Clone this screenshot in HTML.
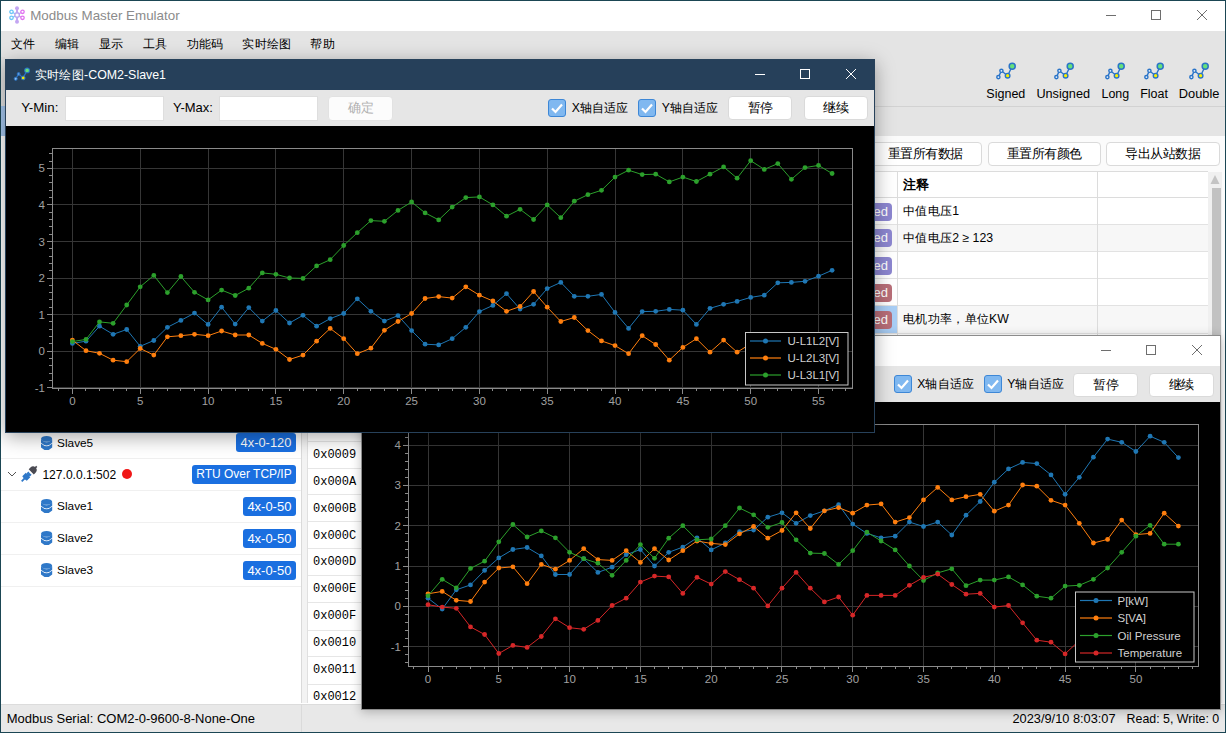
<!DOCTYPE html><html><head><meta charset="utf-8"><style>html,body{margin:0;padding:0;}body{width:1226px;height:733px;overflow:hidden;position:relative;background:#1b4654;font-family:"Liberation Sans", sans-serif;}div{box-sizing:border-box}</style></head><body><div style="position:absolute;left:1px;top:1px;width:1224px;height:731px;background:#fff"></div><svg style="position:absolute;left:8px;top:5px" width="18" height="20" viewBox="0 0 18 20"><g stroke-width="1.3" fill="#fff"><path d="M9.1 10 L9 3.5 M9.1 10 L9 16.5" stroke="#c3a6f2" stroke-width="2"/><path d="M9.1 10 L3.5 6.8 M9.1 10 L3.5 12.8" stroke="#90c8f5" stroke-width="1.3"/><path d="M9.1 10 L14.5 6.8 M9.1 10 L14.5 12.8" stroke="#d8a0f0" stroke-width="1.3"/><circle cx="9.1" cy="10" r="2.3" stroke="#b8a8f0" stroke-width="1.4"/><circle cx="3.5" cy="6.8" r="1.7" stroke="#6cc6f8"/><circle cx="3.5" cy="12.8" r="1.7" stroke="#6cc6f8"/><circle cx="14.5" cy="6.8" r="1.7" stroke="#e070f0"/><circle cx="14.5" cy="12.8" r="1.7" stroke="#e070f0"/></g><g fill="#c3a6f2"><circle cx="9" cy="3.2" r="2"/><circle cx="9" cy="16.8" r="2"/></g></svg><div style="position:absolute;left:30.2px;top:5.5px;line-height:20px;font-size:13.38px;color:#8b8b8b;white-space:nowrap;">Modbus Master Emulator</div><svg style="position:absolute;left:0;top:0" width="1226" height="733" viewBox="0 0 1226 733"><g stroke="#6e6e6e" stroke-width="1" fill="none"><path d="M1106 15.5h10"/><rect x="1151.5" y="10.5" width="9" height="9"/><path d="M1197 10l10 10M1207 10l-10 10"/></g></svg><div style="position:absolute;left:1px;top:31px;width:1224px;height:26px;background:#e4e4e4"></div><div style="position:absolute;left:10.5px;top:33.5px;line-height:20px;font-size:12.4px;color:#000;white-space:nowrap;"><span style="display:inline-block;width:1em;text-align:center">文</span><span style="display:inline-block;width:1em;text-align:center">件</span></div><div style="position:absolute;left:54.5px;top:33.5px;line-height:20px;font-size:12.4px;color:#000;white-space:nowrap;"><span style="display:inline-block;width:1em;text-align:center">编</span><span style="display:inline-block;width:1em;text-align:center">辑</span></div><div style="position:absolute;left:98.5px;top:33.5px;line-height:20px;font-size:12.4px;color:#000;white-space:nowrap;"><span style="display:inline-block;width:1em;text-align:center">显</span><span style="display:inline-block;width:1em;text-align:center">示</span></div><div style="position:absolute;left:142.5px;top:33.5px;line-height:20px;font-size:12.4px;color:#000;white-space:nowrap;"><span style="display:inline-block;width:1em;text-align:center">工</span><span style="display:inline-block;width:1em;text-align:center">具</span></div><div style="position:absolute;left:186.5px;top:33.5px;line-height:20px;font-size:12.4px;color:#000;white-space:nowrap;"><span style="display:inline-block;width:1em;text-align:center">功</span><span style="display:inline-block;width:1em;text-align:center">能</span><span style="display:inline-block;width:1em;text-align:center">码</span></div><div style="position:absolute;left:242px;top:33.5px;line-height:20px;font-size:12.4px;color:#000;white-space:nowrap;"><span style="display:inline-block;width:1em;text-align:center">实</span><span style="display:inline-block;width:1em;text-align:center">时</span><span style="display:inline-block;width:1em;text-align:center">绘</span><span style="display:inline-block;width:1em;text-align:center">图</span></div><div style="position:absolute;left:310px;top:33.5px;line-height:20px;font-size:12.4px;color:#000;white-space:nowrap;"><span style="display:inline-block;width:1em;text-align:center">帮</span><span style="display:inline-block;width:1em;text-align:center">助</span></div><div style="position:absolute;left:1px;top:57px;width:1224px;height:79px;background:#e4e4e4"></div><div style="position:absolute;left:1px;top:106px;width:1224px;height:1px;background:#d2d2d2"></div><svg style="position:absolute;left:996.3px;top:62px" width="21" height="19" viewBox="0 0 21 19"><path d="M2.4 15.1 L5.4 8.8 L11.6 13.7 L16.2 4.3" stroke="#2a74c8" stroke-width="1.4" fill="none"/><circle cx="2.4" cy="15.1" r="1.6" fill="#e8f0fa" stroke="#2a74c8" stroke-width="1.4"/><circle cx="5.4" cy="8.8" r="1.6" fill="#e8f0fa" stroke="#2a74c8" stroke-width="1.4"/><circle cx="11.6" cy="13.7" r="2.3" fill="#f8f000" stroke="#2a74c8" stroke-width="1.4"/><circle cx="16.2" cy="4.3" r="3.0" fill="#66e07a" stroke="#2a74c8" stroke-width="1.5"/></svg><div style="position:absolute;left:986.3px;top:83.5px;line-height:20px;font-size:12.54px;color:#000;white-space:nowrap;">Signed</div><svg style="position:absolute;left:1054.3px;top:62px" width="21" height="19" viewBox="0 0 21 19"><path d="M2.4 15.1 L5.4 8.8 L11.6 13.7 L16.2 4.3" stroke="#2a74c8" stroke-width="1.4" fill="none"/><circle cx="2.4" cy="15.1" r="1.6" fill="#e8f0fa" stroke="#2a74c8" stroke-width="1.4"/><circle cx="5.4" cy="8.8" r="1.6" fill="#e8f0fa" stroke="#2a74c8" stroke-width="1.4"/><circle cx="11.6" cy="13.7" r="2.3" fill="#f8f000" stroke="#2a74c8" stroke-width="1.4"/><circle cx="16.2" cy="4.3" r="3.0" fill="#66e07a" stroke="#2a74c8" stroke-width="1.5"/></svg><div style="position:absolute;left:1036.4px;top:83.5px;line-height:20px;font-size:12.7px;color:#000;white-space:nowrap;">Unsigned</div><svg style="position:absolute;left:1105.3px;top:62px" width="21" height="19" viewBox="0 0 21 19"><path d="M2.4 15.1 L5.4 8.8 L11.6 13.7 L16.2 4.3" stroke="#2a74c8" stroke-width="1.4" fill="none"/><circle cx="2.4" cy="15.1" r="1.6" fill="#e8f0fa" stroke="#2a74c8" stroke-width="1.4"/><circle cx="5.4" cy="8.8" r="1.6" fill="#e8f0fa" stroke="#2a74c8" stroke-width="1.4"/><circle cx="11.6" cy="13.7" r="2.3" fill="#f8f000" stroke="#2a74c8" stroke-width="1.4"/><circle cx="16.2" cy="4.3" r="3.0" fill="#66e07a" stroke="#2a74c8" stroke-width="1.5"/></svg><div style="position:absolute;left:1101.5px;top:83.5px;line-height:20px;font-size:12.43px;color:#000;white-space:nowrap;">Long</div><svg style="position:absolute;left:1144.3px;top:62px" width="21" height="19" viewBox="0 0 21 19"><path d="M2.4 15.1 L5.4 8.8 L11.6 13.7 L16.2 4.3" stroke="#2a74c8" stroke-width="1.4" fill="none"/><circle cx="2.4" cy="15.1" r="1.6" fill="#e8f0fa" stroke="#2a74c8" stroke-width="1.4"/><circle cx="5.4" cy="8.8" r="1.6" fill="#e8f0fa" stroke="#2a74c8" stroke-width="1.4"/><circle cx="11.6" cy="13.7" r="2.3" fill="#f8f000" stroke="#2a74c8" stroke-width="1.4"/><circle cx="16.2" cy="4.3" r="3.0" fill="#66e07a" stroke="#2a74c8" stroke-width="1.5"/></svg><div style="position:absolute;left:1140.2px;top:83.5px;line-height:20px;font-size:12.47px;color:#000;white-space:nowrap;">Float</div><svg style="position:absolute;left:1189.3px;top:62px" width="21" height="19" viewBox="0 0 21 19"><path d="M2.4 15.1 L5.4 8.8 L11.6 13.7 L16.2 4.3" stroke="#2a74c8" stroke-width="1.4" fill="none"/><circle cx="2.4" cy="15.1" r="1.6" fill="#e8f0fa" stroke="#2a74c8" stroke-width="1.4"/><circle cx="5.4" cy="8.8" r="1.6" fill="#e8f0fa" stroke="#2a74c8" stroke-width="1.4"/><circle cx="11.6" cy="13.7" r="2.3" fill="#f8f000" stroke="#2a74c8" stroke-width="1.4"/><circle cx="16.2" cy="4.3" r="3.0" fill="#66e07a" stroke="#2a74c8" stroke-width="1.5"/></svg><div style="position:absolute;left:1178.8px;top:83.5px;line-height:20px;font-size:12.84px;color:#000;white-space:nowrap;">Double</div><div style="position:absolute;left:1px;top:136px;width:1224px;height:567px;background:#fbfbfb"></div><div style="position:absolute;left:868.5px;top:141.5px;width:113.0px;height:24px;background:#fff;border:1px solid #dadada;border-radius:4px;box-sizing:border-box;text-align:center;line-height:22px;font-size:12.5px;color:#000"><span style="display:inline-block;width:1em;text-align:center">重</span><span style="display:inline-block;width:1em;text-align:center">置</span><span style="display:inline-block;width:1em;text-align:center">所</span><span style="display:inline-block;width:1em;text-align:center">有</span><span style="display:inline-block;width:1em;text-align:center">数</span><span style="display:inline-block;width:1em;text-align:center">据</span></div><div style="position:absolute;left:987.5px;top:141.5px;width:113.1px;height:24px;background:#fff;border:1px solid #dadada;border-radius:4px;box-sizing:border-box;text-align:center;line-height:22px;font-size:12.5px;color:#000"><span style="display:inline-block;width:1em;text-align:center">重</span><span style="display:inline-block;width:1em;text-align:center">置</span><span style="display:inline-block;width:1em;text-align:center">所</span><span style="display:inline-block;width:1em;text-align:center">有</span><span style="display:inline-block;width:1em;text-align:center">颜</span><span style="display:inline-block;width:1em;text-align:center">色</span></div><div style="position:absolute;left:1106.4px;top:141.5px;width:113.2px;height:24px;background:#fff;border:1px solid #dadada;border-radius:4px;box-sizing:border-box;text-align:center;line-height:22px;font-size:12.5px;color:#000"><span style="display:inline-block;width:1em;text-align:center">导</span><span style="display:inline-block;width:1em;text-align:center">出</span><span style="display:inline-block;width:1em;text-align:center">从</span><span style="display:inline-block;width:1em;text-align:center">站</span><span style="display:inline-block;width:1em;text-align:center">数</span><span style="display:inline-block;width:1em;text-align:center">据</span></div><div style="position:absolute;left:308px;top:171px;width:900px;height:532px;background:#fff;border-top:1px solid #dcdcdc"></div><div style="position:absolute;left:308px;top:197px;width:900px;height:1px;background:#dcdcdc"></div><div style="position:absolute;left:903px;top:174.5px;line-height:20px;font-size:13px;color:#000;white-space:nowrap;font-weight:bold"><span style="display:inline-block;width:1em;text-align:center">注</span><span style="display:inline-block;width:1em;text-align:center">释</span></div><div style="position:absolute;left:308px;top:198px;width:900px;height:27px;background:#ffffff;border-bottom:1px solid #e2e2e2"></div><div style="position:absolute;left:308px;top:225px;width:900px;height:27px;background:#f7f7f7;border-bottom:1px solid #e2e2e2"></div><div style="position:absolute;left:308px;top:252px;width:900px;height:27px;background:#ffffff;border-bottom:1px solid #e2e2e2"></div><div style="position:absolute;left:308px;top:279px;width:900px;height:27px;background:#ffffff;border-bottom:1px solid #e2e2e2"></div><div style="position:absolute;left:308px;top:306px;width:900px;height:28px;background:#f7f7f7;border-bottom:1px solid #e2e2e2"></div><div style="position:absolute;left:868px;top:306px;width:29px;height:27px;background:#a9cef5"></div><div style="position:absolute;left:850px;top:202.6px;width:42px;height:18px;background:#8c86d0;border-radius:4px;color:#fff;font-size:13px;line-height:18px;text-align:right;padding-right:4px">ed</div><div style="position:absolute;left:903px;top:200.9px;line-height:20px;font-size:12.3px;color:#000;white-space:nowrap;"><span style="display:inline-block;width:1em;text-align:center">中</span><span style="display:inline-block;width:1em;text-align:center">值</span><span style="display:inline-block;width:1em;text-align:center">电</span><span style="display:inline-block;width:1em;text-align:center">压</span>1</div><div style="position:absolute;left:850px;top:229.4px;width:42px;height:18px;background:#8c86d0;border-radius:4px;color:#fff;font-size:13px;line-height:18px;text-align:right;padding-right:4px">ed</div><div style="position:absolute;left:903px;top:227.8px;line-height:20px;font-size:12.3px;color:#000;white-space:nowrap;"><span style="display:inline-block;width:1em;text-align:center">中</span><span style="display:inline-block;width:1em;text-align:center">值</span><span style="display:inline-block;width:1em;text-align:center">电</span><span style="display:inline-block;width:1em;text-align:center">压</span>2 ≥ 123</div><div style="position:absolute;left:850px;top:256.5px;width:42px;height:18px;background:#8c86d0;border-radius:4px;color:#fff;font-size:13px;line-height:18px;text-align:right;padding-right:4px">ed</div><div style="position:absolute;left:850px;top:283.5px;width:42px;height:18px;background:#b86e78;border-radius:4px;color:#fff;font-size:13px;line-height:18px;text-align:right;padding-right:4px">ed</div><div style="position:absolute;left:850px;top:310.8px;width:42px;height:18px;background:#b86e78;border-radius:4px;color:#fff;font-size:13px;line-height:18px;text-align:right;padding-right:4px">ed</div><div style="position:absolute;left:903px;top:309.1px;line-height:20px;font-size:12.3px;color:#000;white-space:nowrap;"><span style="display:inline-block;width:1em;text-align:center">电</span><span style="display:inline-block;width:1em;text-align:center">机</span><span style="display:inline-block;width:1em;text-align:center">功</span><span style="display:inline-block;width:1em;text-align:center">率</span><span style="display:inline-block;width:1em;text-align:center">，</span><span style="display:inline-block;width:1em;text-align:center">单</span><span style="display:inline-block;width:1em;text-align:center">位</span>KW</div><div style="position:absolute;left:897px;top:171px;width:1px;height:170px;background:#dcdcdc"></div><div style="position:absolute;left:1097px;top:171px;width:1px;height:170px;background:#dcdcdc"></div><div style="position:absolute;left:1208px;top:172px;width:14px;height:531px;background:#f0f0f0"></div><svg style="position:absolute;left:1208px;top:172px" width="14" height="16"><path d="M7 3 L11.5 12 H2.5Z" fill="#c4c4c4"/></svg><div style="position:absolute;left:1212px;top:188px;width:9px;height:520px;background:#c2c2c2"></div><div style="position:absolute;left:1px;top:136px;width:300px;height:567px;background:#fff"></div><div style="position:absolute;left:301px;top:136px;width:1px;height:567px;background:#dadada"></div><div style="position:absolute;left:302px;top:136px;width:6px;height:567px;background:#f3f3f3"></div><div style="position:absolute;left:307px;top:136px;width:1px;height:567px;background:#e0e0e0"></div><div style="position:absolute;left:1px;top:458px;width:300px;height:1px;background:#f0f0f0"></div><div style="position:absolute;left:1px;top:490px;width:300px;height:1px;background:#f0f0f0"></div><div style="position:absolute;left:1px;top:522px;width:300px;height:1px;background:#f0f0f0"></div><div style="position:absolute;left:1px;top:554px;width:300px;height:1px;background:#f0f0f0"></div><div style="position:absolute;left:1px;top:586px;width:300px;height:1px;background:#f0f0f0"></div><div style="position:absolute;left:1px;top:106px;width:4px;height:30px;background:#a6c8f0"></div><div style="position:absolute;left:1px;top:57px;width:4px;height:49px;background:#e0e0e0"></div><svg style="position:absolute;left:41px;top:435.5px" width="12" height="15" viewBox="0 0 12 15"><g fill="#2f78c8"><ellipse cx="5.6" cy="2.9" rx="5.6" ry="2.9"/><path d="M0 3.6 Q5.6 9.0 11.2 3.6 V6.7 Q5.6 12.1 0 6.7Z"/><path d="M0 7.5 Q5.6 12.9 11.2 7.5 V11.4 Q5.6 16.8 0 11.4Z"/></g></svg><div style="position:absolute;left:57.1px;top:432.5px;line-height:20px;font-size:11.8px;color:#000;white-space:nowrap;">Slave5</div><div style="position:absolute;left:236.0px;width:60.0px;top:433.1px;height:19px;line-height:19px;background:#1a6fe0;color:#fff;font-size:12.86px;border-radius:3px;white-space:nowrap;text-align:center">4x-0-120</div><svg style="position:absolute;left:6px;top:468px" width="12" height="12"><path d="M2 4 L6 8 L10 4" stroke="#555" stroke-width="1" fill="none"/></svg><svg style="position:absolute;left:0;top:440px" width="60" height="60" viewBox="0 440 60 60"><g transform="translate(27 476.1) rotate(-45)"><path d="M-7.5 0H-3" stroke="#2f78c8" stroke-width="1.8"/><path d="M-3.5 -3.2 Q-4.5 0 -3.5 3.2 L1.5 3.2 V1.2 H4 V-1.2 H1.5 V-3.2Z" fill="#2f78c8"/><path d="M1.5 1.6H4.2M1.5 -1.6H4.2" stroke="#2f78c8" stroke-width="1.4"/><path d="M6 -3.6 H8.5 A3.6 3.6 0 0 1 8.5 3.6 H6Z" fill="#4a4a52"/><path d="M11 0H13.8" stroke="#4a4a52" stroke-width="1.6"/></g></svg><div style="position:absolute;left:42.4px;top:465.2px;line-height:20px;font-size:12.08px;color:#000;white-space:nowrap;">127.0.0.1:502</div><div style="position:absolute;left:122px;top:469px;width:10px;height:10px;border-radius:5px;background:#f01818"></div><div style="position:absolute;left:192.0px;width:104.0px;top:465.0px;height:19px;line-height:19px;background:#1a6fe0;color:#fff;font-size:11.97px;border-radius:3px;white-space:nowrap;text-align:center">RTU Over TCP/IP</div><svg style="position:absolute;left:41px;top:498.9px" width="12" height="15" viewBox="0 0 12 15"><g fill="#2f78c8"><ellipse cx="5.6" cy="2.9" rx="5.6" ry="2.9"/><path d="M0 3.6 Q5.6 9.0 11.2 3.6 V6.7 Q5.6 12.1 0 6.7Z"/><path d="M0 7.5 Q5.6 12.9 11.2 7.5 V11.4 Q5.6 16.8 0 11.4Z"/></g></svg><div style="position:absolute;left:57.1px;top:496.0px;line-height:20px;font-size:11.8px;color:#000;white-space:nowrap;">Slave1</div><div style="position:absolute;left:242.8px;width:53.2px;top:496.5px;height:19px;line-height:19px;background:#1a6fe0;color:#fff;font-size:12.98px;border-radius:3px;white-space:nowrap;text-align:center">4x-0-50</div><svg style="position:absolute;left:41px;top:531.3px" width="12" height="15" viewBox="0 0 12 15"><g fill="#2f78c8"><ellipse cx="5.6" cy="2.9" rx="5.6" ry="2.9"/><path d="M0 3.6 Q5.6 9.0 11.2 3.6 V6.7 Q5.6 12.1 0 6.7Z"/><path d="M0 7.5 Q5.6 12.9 11.2 7.5 V11.4 Q5.6 16.8 0 11.4Z"/></g></svg><div style="position:absolute;left:57.1px;top:528.4px;line-height:20px;font-size:11.8px;color:#000;white-space:nowrap;">Slave2</div><div style="position:absolute;left:242.8px;width:53.2px;top:528.9px;height:19px;line-height:19px;background:#1a6fe0;color:#fff;font-size:12.98px;border-radius:3px;white-space:nowrap;text-align:center">4x-0-50</div><svg style="position:absolute;left:41px;top:563.1999999999999px" width="12" height="15" viewBox="0 0 12 15"><g fill="#2f78c8"><ellipse cx="5.6" cy="2.9" rx="5.6" ry="2.9"/><path d="M0 3.6 Q5.6 9.0 11.2 3.6 V6.7 Q5.6 12.1 0 6.7Z"/><path d="M0 7.5 Q5.6 12.9 11.2 7.5 V11.4 Q5.6 16.8 0 11.4Z"/></g></svg><div style="position:absolute;left:57.1px;top:560.3px;line-height:20px;font-size:11.8px;color:#000;white-space:nowrap;">Slave3</div><div style="position:absolute;left:242.8px;width:53.2px;top:560.8px;height:19px;line-height:19px;background:#1a6fe0;color:#fff;font-size:12.98px;border-radius:3px;white-space:nowrap;text-align:center">4x-0-50</div><div style="position:absolute;left:308px;top:432px;width:54px;height:271px;background:#fff"></div><div style="position:absolute;left:308px;top:441px;width:54px;height:1px;background:#e6e6e6"></div><div style="position:absolute;left:308px;top:468px;width:54px;height:1px;background:#e6e6e6"></div><div style="position:absolute;left:308px;top:494px;width:54px;height:1px;background:#e6e6e6"></div><div style="position:absolute;left:308px;top:521px;width:54px;height:1px;background:#e6e6e6"></div><div style="position:absolute;left:308px;top:548px;width:54px;height:1px;background:#e6e6e6"></div><div style="position:absolute;left:308px;top:575px;width:54px;height:1px;background:#e6e6e6"></div><div style="position:absolute;left:308px;top:602px;width:54px;height:1px;background:#e6e6e6"></div><div style="position:absolute;left:308px;top:630px;width:54px;height:1px;background:#e6e6e6"></div><div style="position:absolute;left:308px;top:656px;width:54px;height:1px;background:#e6e6e6"></div><div style="position:absolute;left:308px;top:684px;width:54px;height:1px;background:#e6e6e6"></div><div style="position:absolute;left:313px;top:444.6px;line-height:20px;font-family:'Liberation Mono', monospace;font-size:12px;color:#000;white-space:nowrap">0x0009</div><div style="position:absolute;left:313px;top:471.6px;line-height:20px;font-family:'Liberation Mono', monospace;font-size:12px;color:#000;white-space:nowrap">0x000A</div><div style="position:absolute;left:313px;top:498.5px;line-height:20px;font-family:'Liberation Mono', monospace;font-size:12px;color:#000;white-space:nowrap">0x000B</div><div style="position:absolute;left:313px;top:525.5px;line-height:20px;font-family:'Liberation Mono', monospace;font-size:12px;color:#000;white-space:nowrap">0x000C</div><div style="position:absolute;left:313px;top:552.4px;line-height:20px;font-family:'Liberation Mono', monospace;font-size:12px;color:#000;white-space:nowrap">0x000D</div><div style="position:absolute;left:313px;top:579.4px;line-height:20px;font-family:'Liberation Mono', monospace;font-size:12px;color:#000;white-space:nowrap">0x000E</div><div style="position:absolute;left:313px;top:606.4px;line-height:20px;font-family:'Liberation Mono', monospace;font-size:12px;color:#000;white-space:nowrap">0x000F</div><div style="position:absolute;left:313px;top:633.3px;line-height:20px;font-family:'Liberation Mono', monospace;font-size:12px;color:#000;white-space:nowrap">0x0010</div><div style="position:absolute;left:313px;top:660.3px;line-height:20px;font-family:'Liberation Mono', monospace;font-size:12px;color:#000;white-space:nowrap">0x0011</div><div style="position:absolute;left:313px;top:687.2px;line-height:20px;font-family:'Liberation Mono', monospace;font-size:12px;color:#000;white-space:nowrap">0x0012</div><div style="position:absolute;left:1px;top:704px;width:1224px;height:28px;background:#e8e8e8;border-top:1px solid #dcdcdc"></div><div style="position:absolute;left:301px;top:704px;width:1px;height:28px;background:#dadada"></div><div style="position:absolute;left:6.7px;top:708.5px;line-height:20px;font-size:12.99px;color:#000;white-space:nowrap;">Modbus Serial: COM2-0-9600-8-None-One</div><div style="position:absolute;left:1012.5px;top:708.5px;line-height:20px;font-size:12.79px;color:#000;white-space:nowrap;">2023/9/10 8:03:07</div><div style="position:absolute;left:1126.6px;top:708.5px;line-height:20px;font-size:12.39px;color:#000;white-space:nowrap;">Read: 5, Write: 0</div><div style="position:absolute;left:361px;top:335px;width:860px;height:375px;background:#fff;border:1px solid #8c8c8c;box-shadow:0 2px 10px rgba(0,0,0,0.25)"></div><svg style="position:absolute;left:0;top:0" width="1226" height="733" viewBox="0 0 1226 733"><g stroke="#6e6e6e" stroke-width="1" fill="none"><path d="M1101 350.5h10"/><rect x="1146.5" y="345.5" width="9" height="9"/><path d="M1192 345l10 10M1202 345l-10 10"/></g></svg><div style="position:absolute;left:362px;top:366px;width:858px;height:36px;background:#e6e6e6"></div><div style="position:absolute;left:893.7px;top:375px;width:16px;height:16px;border:1px solid #3d87d6;background:#80b8f0;border-radius:3px;box-sizing:content-box"></div><svg style="position:absolute;left:893.7px;top:375px" width="18" height="18"><path d="M4 9.5 L7.5 13 L14 5.5" stroke="#fff" stroke-width="2.2" fill="none"/></svg><div style="position:absolute;left:917.2px;top:374.0px;line-height:20px;font-size:12.2px;color:#000;white-space:nowrap;">X<span style="display:inline-block;width:1em;text-align:center">轴</span><span style="display:inline-block;width:1em;text-align:center">自</span><span style="display:inline-block;width:1em;text-align:center">适</span><span style="display:inline-block;width:1em;text-align:center">应</span></div><div style="position:absolute;left:983.5px;top:375px;width:16px;height:16px;border:1px solid #3d87d6;background:#80b8f0;border-radius:3px;box-sizing:content-box"></div><svg style="position:absolute;left:983.5px;top:375px" width="18" height="18"><path d="M4 9.5 L7.5 13 L14 5.5" stroke="#fff" stroke-width="2.2" fill="none"/></svg><div style="position:absolute;left:1007.2px;top:374.0px;line-height:20px;font-size:12.2px;color:#000;white-space:nowrap;">Y<span style="display:inline-block;width:1em;text-align:center">轴</span><span style="display:inline-block;width:1em;text-align:center">自</span><span style="display:inline-block;width:1em;text-align:center">适</span><span style="display:inline-block;width:1em;text-align:center">应</span></div><div style="position:absolute;left:1073.4px;top:372.5px;width:64.6px;height:24px;background:#fff;border:1px solid #dadada;border-radius:4px;box-sizing:border-box;text-align:center;line-height:22px;font-size:12.5px;color:#000"><span style="display:inline-block;width:1em;text-align:center">暂</span><span style="display:inline-block;width:1em;text-align:center">停</span></div><div style="position:absolute;left:1149.2px;top:372.5px;width:64.6px;height:24px;background:#fff;border:1px solid #dadada;border-radius:4px;box-sizing:border-box;text-align:center;line-height:22px;font-size:12.5px;color:#000"><span style="display:inline-block;width:1em;text-align:center">继</span><span style="display:inline-block;width:1em;text-align:center">续</span></div><svg style="position:absolute;left:362px;top:402px" width="858" height="307" viewBox="362 402 858 307"><rect x="362" y="402" width="858" height="307" fill="#000"/><path d="M428.5 424V666M498.5 424V666M569.5 424V666M640.5 424V666M711.5 424V666M781.5 424V666M852.5 424V666M923.5 424V666M994.5 424V666M1065.5 424V666M1135.5 424V666M408 445.5H1198M408 485.5H1198M408 525.5H1198M408 566.5H1198M408 606.5H1198M408 646.5H1198" stroke="#363636" stroke-width="1" fill="none"/><path d="M413.5 666v3M428.5 666v6M442.5 666v3M456.5 666v3M470.5 666v3M484.5 666v3M498.5 666v6M512.5 666v3M527.5 666v3M541.5 666v3M555.5 666v3M569.5 666v6M583.5 666v3M597.5 666v3M612.5 666v3M626.5 666v3M640.5 666v6M654.5 666v3M668.5 666v3M682.5 666v3M697.5 666v3M711.5 666v6M725.5 666v3M739.5 666v3M753.5 666v3M767.5 666v3M781.5 666v6M796.5 666v3M810.5 666v3M824.5 666v3M838.5 666v3M852.5 666v6M866.5 666v3M881.5 666v3M895.5 666v3M909.5 666v3M923.5 666v6M937.5 666v3M951.5 666v3M966.5 666v3M980.5 666v3M994.5 666v6M1008.5 666v3M1022.5 666v3M1036.5 666v3M1050.5 666v3M1065.5 666v6M1079.5 666v3M1093.5 666v3M1107.5 666v3M1121.5 666v3M1135.5 666v6M1150.5 666v3M1164.5 666v3M1178.5 666v3M1192.5 666v3M408 662.5h-3M408 654.5h-3M408 646.5h-5M408 638.5h-3M408 630.5h-3M408 622.5h-3M408 614.5h-3M408 606.5h-5M408 598.5h-3M408 590.5h-3M408 582.5h-3M408 574.5h-3M408 566.5h-5M408 557.5h-3M408 549.5h-3M408 541.5h-3M408 533.5h-3M408 525.5h-5M408 517.5h-3M408 509.5h-3M408 501.5h-3M408 493.5h-3M408 485.5h-5M408 477.5h-3M408 469.5h-3M408 461.5h-3M408 453.5h-3M408 445.5h-5M408 437.5h-3M408 428.5h-3" stroke="#8a8a8a" stroke-width="1" fill="none"/><rect x="408.5" y="424.5" width="790" height="242" stroke="#8a8a8a" stroke-width="1" fill="none"/><g font-family='"Liberation Sans", sans-serif' font-size="11.5" fill="#a0a0a0"><text x="428.0" y="683" text-anchor="middle">0</text><text x="498.8" y="683" text-anchor="middle">5</text><text x="569.6" y="683" text-anchor="middle">10</text><text x="640.4" y="683" text-anchor="middle">15</text><text x="711.2" y="683" text-anchor="middle">20</text><text x="782.0" y="683" text-anchor="middle">25</text><text x="852.7" y="683" text-anchor="middle">30</text><text x="923.5" y="683" text-anchor="middle">35</text><text x="994.3" y="683" text-anchor="middle">40</text><text x="1065.1" y="683" text-anchor="middle">45</text><text x="1135.9" y="683" text-anchor="middle">50</text><text x="401" y="449.1" text-anchor="end">4</text><text x="401" y="489.4" text-anchor="end">3</text><text x="401" y="529.7" text-anchor="end">2</text><text x="401" y="570.0" text-anchor="end">1</text><text x="401" y="610.3" text-anchor="end">0</text><text x="401" y="650.6" text-anchor="end">-1</text></g><defs><clipPath id="cp362"><rect x="409" y="425" width="789" height="241"/></clipPath></defs><g clip-path="url(#cp362)"><polyline points="428.0,598.2 442.2,609.1 456.3,589.8 470.5,584.9 484.6,570.4 498.8,557.9 512.9,549.5 527.1,547.5 541.3,555.9 555.4,574.5 569.6,574.5 583.7,558.7 597.9,572.4 612.1,567.2 626.2,554.7 640.4,549.5 654.5,566.0 668.7,552.3 682.8,547.1 697.0,537.8 711.2,549.9 725.3,543.0 739.5,531.7 753.6,530.1 767.8,517.2 782.0,512.8 796.1,523.3 810.3,515.6 824.4,510.8 838.6,504.7 852.7,524.1 866.9,533.4 881.1,537.8 895.2,536.2 909.4,522.1 923.5,526.5 937.7,522.1 951.8,535.0 966.0,515.2 980.2,501.5 994.3,482.2 1008.5,468.9 1022.6,462.4 1036.8,463.6 1051.0,474.9 1065.1,494.3 1079.3,477.3 1093.4,457.2 1107.6,439.1 1121.7,442.3 1135.9,451.5 1150.1,436.2 1164.2,442.3 1178.4,457.6" fill="none" stroke="#1f77b4" stroke-width="1"/><g fill="#1f77b4"><circle cx="428.0" cy="598.2" r="2.4"/><circle cx="442.2" cy="609.1" r="2.4"/><circle cx="456.3" cy="589.8" r="2.4"/><circle cx="470.5" cy="584.9" r="2.4"/><circle cx="484.6" cy="570.4" r="2.4"/><circle cx="498.8" cy="557.9" r="2.4"/><circle cx="512.9" cy="549.5" r="2.4"/><circle cx="527.1" cy="547.5" r="2.4"/><circle cx="541.3" cy="555.9" r="2.4"/><circle cx="555.4" cy="574.5" r="2.4"/><circle cx="569.6" cy="574.5" r="2.4"/><circle cx="583.7" cy="558.7" r="2.4"/><circle cx="597.9" cy="572.4" r="2.4"/><circle cx="612.1" cy="567.2" r="2.4"/><circle cx="626.2" cy="554.7" r="2.4"/><circle cx="640.4" cy="549.5" r="2.4"/><circle cx="654.5" cy="566.0" r="2.4"/><circle cx="668.7" cy="552.3" r="2.4"/><circle cx="682.8" cy="547.1" r="2.4"/><circle cx="697.0" cy="537.8" r="2.4"/><circle cx="711.2" cy="549.9" r="2.4"/><circle cx="725.3" cy="543.0" r="2.4"/><circle cx="739.5" cy="531.7" r="2.4"/><circle cx="753.6" cy="530.1" r="2.4"/><circle cx="767.8" cy="517.2" r="2.4"/><circle cx="782.0" cy="512.8" r="2.4"/><circle cx="796.1" cy="523.3" r="2.4"/><circle cx="810.3" cy="515.6" r="2.4"/><circle cx="824.4" cy="510.8" r="2.4"/><circle cx="838.6" cy="504.7" r="2.4"/><circle cx="852.7" cy="524.1" r="2.4"/><circle cx="866.9" cy="533.4" r="2.4"/><circle cx="881.1" cy="537.8" r="2.4"/><circle cx="895.2" cy="536.2" r="2.4"/><circle cx="909.4" cy="522.1" r="2.4"/><circle cx="923.5" cy="526.5" r="2.4"/><circle cx="937.7" cy="522.1" r="2.4"/><circle cx="951.8" cy="535.0" r="2.4"/><circle cx="966.0" cy="515.2" r="2.4"/><circle cx="980.2" cy="501.5" r="2.4"/><circle cx="994.3" cy="482.2" r="2.4"/><circle cx="1008.5" cy="468.9" r="2.4"/><circle cx="1022.6" cy="462.4" r="2.4"/><circle cx="1036.8" cy="463.6" r="2.4"/><circle cx="1051.0" cy="474.9" r="2.4"/><circle cx="1065.1" cy="494.3" r="2.4"/><circle cx="1079.3" cy="477.3" r="2.4"/><circle cx="1093.4" cy="457.2" r="2.4"/><circle cx="1107.6" cy="439.1" r="2.4"/><circle cx="1121.7" cy="442.3" r="2.4"/><circle cx="1135.9" cy="451.5" r="2.4"/><circle cx="1150.1" cy="436.2" r="2.4"/><circle cx="1164.2" cy="442.3" r="2.4"/><circle cx="1178.4" cy="457.6" r="2.4"/></g><polyline points="428.0,593.8 442.2,591.4 456.3,600.3 470.5,601.5 484.6,582.1 498.8,568.0 512.9,566.8 527.1,583.7 541.3,564.4 555.4,569.2 569.6,560.4 583.7,548.7 597.9,559.6 612.1,560.4 626.2,550.7 640.4,562.4 654.5,548.7 668.7,560.0 682.8,550.7 697.0,541.0 711.2,543.4 725.3,544.6 739.5,533.8 753.6,526.5 767.8,538.2 782.0,530.5 796.1,512.8 810.3,528.5 824.4,510.8 838.6,507.6 852.7,513.2 866.9,505.1 881.1,503.9 895.2,522.1 909.4,517.6 923.5,499.9 937.7,487.4 951.8,499.9 966.0,496.7 980.2,494.3 994.3,511.2 1008.5,505.1 1022.6,485.0 1036.8,486.2 1051.0,500.3 1065.1,505.1 1079.3,523.3 1093.4,543.0 1107.6,539.4 1121.7,520.1 1135.9,534.6 1150.1,533.4 1164.2,513.2 1178.4,526.1" fill="none" stroke="#ff7f0e" stroke-width="1"/><g fill="#ff7f0e"><circle cx="428.0" cy="593.8" r="2.4"/><circle cx="442.2" cy="591.4" r="2.4"/><circle cx="456.3" cy="600.3" r="2.4"/><circle cx="470.5" cy="601.5" r="2.4"/><circle cx="484.6" cy="582.1" r="2.4"/><circle cx="498.8" cy="568.0" r="2.4"/><circle cx="512.9" cy="566.8" r="2.4"/><circle cx="527.1" cy="583.7" r="2.4"/><circle cx="541.3" cy="564.4" r="2.4"/><circle cx="555.4" cy="569.2" r="2.4"/><circle cx="569.6" cy="560.4" r="2.4"/><circle cx="583.7" cy="548.7" r="2.4"/><circle cx="597.9" cy="559.6" r="2.4"/><circle cx="612.1" cy="560.4" r="2.4"/><circle cx="626.2" cy="550.7" r="2.4"/><circle cx="640.4" cy="562.4" r="2.4"/><circle cx="654.5" cy="548.7" r="2.4"/><circle cx="668.7" cy="560.0" r="2.4"/><circle cx="682.8" cy="550.7" r="2.4"/><circle cx="697.0" cy="541.0" r="2.4"/><circle cx="711.2" cy="543.4" r="2.4"/><circle cx="725.3" cy="544.6" r="2.4"/><circle cx="739.5" cy="533.8" r="2.4"/><circle cx="753.6" cy="526.5" r="2.4"/><circle cx="767.8" cy="538.2" r="2.4"/><circle cx="782.0" cy="530.5" r="2.4"/><circle cx="796.1" cy="512.8" r="2.4"/><circle cx="810.3" cy="528.5" r="2.4"/><circle cx="824.4" cy="510.8" r="2.4"/><circle cx="838.6" cy="507.6" r="2.4"/><circle cx="852.7" cy="513.2" r="2.4"/><circle cx="866.9" cy="505.1" r="2.4"/><circle cx="881.1" cy="503.9" r="2.4"/><circle cx="895.2" cy="522.1" r="2.4"/><circle cx="909.4" cy="517.6" r="2.4"/><circle cx="923.5" cy="499.9" r="2.4"/><circle cx="937.7" cy="487.4" r="2.4"/><circle cx="951.8" cy="499.9" r="2.4"/><circle cx="966.0" cy="496.7" r="2.4"/><circle cx="980.2" cy="494.3" r="2.4"/><circle cx="994.3" cy="511.2" r="2.4"/><circle cx="1008.5" cy="505.1" r="2.4"/><circle cx="1022.6" cy="485.0" r="2.4"/><circle cx="1036.8" cy="486.2" r="2.4"/><circle cx="1051.0" cy="500.3" r="2.4"/><circle cx="1065.1" cy="505.1" r="2.4"/><circle cx="1079.3" cy="523.3" r="2.4"/><circle cx="1093.4" cy="543.0" r="2.4"/><circle cx="1107.6" cy="539.4" r="2.4"/><circle cx="1121.7" cy="520.1" r="2.4"/><circle cx="1135.9" cy="534.6" r="2.4"/><circle cx="1150.1" cy="533.4" r="2.4"/><circle cx="1164.2" cy="513.2" r="2.4"/><circle cx="1178.4" cy="526.1" r="2.4"/></g><polyline points="428.0,595.8 442.2,579.3 456.3,587.8 470.5,568.4 484.6,561.2 498.8,541.8 512.9,524.5 527.1,537.0 541.3,530.9 555.4,537.8 569.6,552.3 583.7,558.7 597.9,563.2 612.1,575.3 626.2,560.4 640.4,544.6 654.5,558.3 668.7,538.2 682.8,525.7 697.0,539.8 711.2,539.0 725.3,525.7 739.5,508.0 753.6,514.8 767.8,527.3 782.0,522.5 796.1,539.8 810.3,553.1 824.4,553.5 838.6,564.4 852.7,550.7 866.9,532.1 881.1,541.0 895.2,549.9 909.4,566.0 923.5,580.5 937.7,572.9 951.8,568.8 966.0,585.7 980.2,580.1 994.3,580.1 1008.5,576.9 1022.6,584.9 1036.8,596.2 1051.0,598.2 1065.1,586.1 1079.3,585.3 1093.4,579.3 1107.6,568.0 1121.7,552.3 1135.9,536.2 1150.1,525.3 1164.2,544.2 1178.4,544.2" fill="none" stroke="#2ca02c" stroke-width="1"/><g fill="#2ca02c"><circle cx="428.0" cy="595.8" r="2.4"/><circle cx="442.2" cy="579.3" r="2.4"/><circle cx="456.3" cy="587.8" r="2.4"/><circle cx="470.5" cy="568.4" r="2.4"/><circle cx="484.6" cy="561.2" r="2.4"/><circle cx="498.8" cy="541.8" r="2.4"/><circle cx="512.9" cy="524.5" r="2.4"/><circle cx="527.1" cy="537.0" r="2.4"/><circle cx="541.3" cy="530.9" r="2.4"/><circle cx="555.4" cy="537.8" r="2.4"/><circle cx="569.6" cy="552.3" r="2.4"/><circle cx="583.7" cy="558.7" r="2.4"/><circle cx="597.9" cy="563.2" r="2.4"/><circle cx="612.1" cy="575.3" r="2.4"/><circle cx="626.2" cy="560.4" r="2.4"/><circle cx="640.4" cy="544.6" r="2.4"/><circle cx="654.5" cy="558.3" r="2.4"/><circle cx="668.7" cy="538.2" r="2.4"/><circle cx="682.8" cy="525.7" r="2.4"/><circle cx="697.0" cy="539.8" r="2.4"/><circle cx="711.2" cy="539.0" r="2.4"/><circle cx="725.3" cy="525.7" r="2.4"/><circle cx="739.5" cy="508.0" r="2.4"/><circle cx="753.6" cy="514.8" r="2.4"/><circle cx="767.8" cy="527.3" r="2.4"/><circle cx="782.0" cy="522.5" r="2.4"/><circle cx="796.1" cy="539.8" r="2.4"/><circle cx="810.3" cy="553.1" r="2.4"/><circle cx="824.4" cy="553.5" r="2.4"/><circle cx="838.6" cy="564.4" r="2.4"/><circle cx="852.7" cy="550.7" r="2.4"/><circle cx="866.9" cy="532.1" r="2.4"/><circle cx="881.1" cy="541.0" r="2.4"/><circle cx="895.2" cy="549.9" r="2.4"/><circle cx="909.4" cy="566.0" r="2.4"/><circle cx="923.5" cy="580.5" r="2.4"/><circle cx="937.7" cy="572.9" r="2.4"/><circle cx="951.8" cy="568.8" r="2.4"/><circle cx="966.0" cy="585.7" r="2.4"/><circle cx="980.2" cy="580.1" r="2.4"/><circle cx="994.3" cy="580.1" r="2.4"/><circle cx="1008.5" cy="576.9" r="2.4"/><circle cx="1022.6" cy="584.9" r="2.4"/><circle cx="1036.8" cy="596.2" r="2.4"/><circle cx="1051.0" cy="598.2" r="2.4"/><circle cx="1065.1" cy="586.1" r="2.4"/><circle cx="1079.3" cy="585.3" r="2.4"/><circle cx="1093.4" cy="579.3" r="2.4"/><circle cx="1107.6" cy="568.0" r="2.4"/><circle cx="1121.7" cy="552.3" r="2.4"/><circle cx="1135.9" cy="536.2" r="2.4"/><circle cx="1150.1" cy="525.3" r="2.4"/><circle cx="1164.2" cy="544.2" r="2.4"/><circle cx="1178.4" cy="544.2" r="2.4"/></g><polyline points="428.0,604.7 442.2,607.1 456.3,608.3 470.5,626.9 484.6,634.5 498.8,653.5 512.9,645.4 527.1,647.4 541.3,636.5 555.4,618.8 569.6,627.7 583.7,629.3 597.9,620.4 612.1,605.5 626.2,598.2 640.4,582.1 654.5,576.1 668.7,576.9 682.8,593.4 697.0,577.3 711.2,584.1 725.3,571.6 739.5,579.7 753.6,588.2 767.8,605.9 782.0,588.2 796.1,572.4 810.3,588.2 824.4,601.9 838.6,597.0 852.7,615.2 866.9,595.4 881.1,595.4 895.2,595.4 909.4,585.3 923.5,577.3 937.7,574.1 951.8,584.5 966.0,594.2 980.2,593.4 994.3,607.1 1008.5,605.5 1022.6,622.8 1036.8,640.2 1051.0,642.2 1065.1,653.9 1079.3,640.6 1093.4,634.5 1107.6,642.6 1121.7,630.5 1135.9,638.5 1150.1,626.4 1164.2,634.5 1178.4,630.5" fill="none" stroke="#d62728" stroke-width="1"/><g fill="#d62728"><circle cx="428.0" cy="604.7" r="2.4"/><circle cx="442.2" cy="607.1" r="2.4"/><circle cx="456.3" cy="608.3" r="2.4"/><circle cx="470.5" cy="626.9" r="2.4"/><circle cx="484.6" cy="634.5" r="2.4"/><circle cx="498.8" cy="653.5" r="2.4"/><circle cx="512.9" cy="645.4" r="2.4"/><circle cx="527.1" cy="647.4" r="2.4"/><circle cx="541.3" cy="636.5" r="2.4"/><circle cx="555.4" cy="618.8" r="2.4"/><circle cx="569.6" cy="627.7" r="2.4"/><circle cx="583.7" cy="629.3" r="2.4"/><circle cx="597.9" cy="620.4" r="2.4"/><circle cx="612.1" cy="605.5" r="2.4"/><circle cx="626.2" cy="598.2" r="2.4"/><circle cx="640.4" cy="582.1" r="2.4"/><circle cx="654.5" cy="576.1" r="2.4"/><circle cx="668.7" cy="576.9" r="2.4"/><circle cx="682.8" cy="593.4" r="2.4"/><circle cx="697.0" cy="577.3" r="2.4"/><circle cx="711.2" cy="584.1" r="2.4"/><circle cx="725.3" cy="571.6" r="2.4"/><circle cx="739.5" cy="579.7" r="2.4"/><circle cx="753.6" cy="588.2" r="2.4"/><circle cx="767.8" cy="605.9" r="2.4"/><circle cx="782.0" cy="588.2" r="2.4"/><circle cx="796.1" cy="572.4" r="2.4"/><circle cx="810.3" cy="588.2" r="2.4"/><circle cx="824.4" cy="601.9" r="2.4"/><circle cx="838.6" cy="597.0" r="2.4"/><circle cx="852.7" cy="615.2" r="2.4"/><circle cx="866.9" cy="595.4" r="2.4"/><circle cx="881.1" cy="595.4" r="2.4"/><circle cx="895.2" cy="595.4" r="2.4"/><circle cx="909.4" cy="585.3" r="2.4"/><circle cx="923.5" cy="577.3" r="2.4"/><circle cx="937.7" cy="574.1" r="2.4"/><circle cx="951.8" cy="584.5" r="2.4"/><circle cx="966.0" cy="594.2" r="2.4"/><circle cx="980.2" cy="593.4" r="2.4"/><circle cx="994.3" cy="607.1" r="2.4"/><circle cx="1008.5" cy="605.5" r="2.4"/><circle cx="1022.6" cy="622.8" r="2.4"/><circle cx="1036.8" cy="640.2" r="2.4"/><circle cx="1051.0" cy="642.2" r="2.4"/><circle cx="1065.1" cy="653.9" r="2.4"/><circle cx="1079.3" cy="640.6" r="2.4"/><circle cx="1093.4" cy="634.5" r="2.4"/><circle cx="1107.6" cy="642.6" r="2.4"/><circle cx="1121.7" cy="630.5" r="2.4"/><circle cx="1135.9" cy="638.5" r="2.4"/><circle cx="1150.1" cy="626.4" r="2.4"/><circle cx="1164.2" cy="634.5" r="2.4"/><circle cx="1178.4" cy="630.5" r="2.4"/></g></g><rect x="1075.5" y="592.0" width="118.5" height="70.0" fill="#000" stroke="#c8c8c8" stroke-width="1"/><path d="M1080 600.5H1112" stroke="#1f77b4" stroke-width="1.2"/><circle cx="1096.0" cy="600.5" r="2.5" fill="#1f77b4"/><text x="1117.5" y="604.5" font-family='"Liberation Sans", sans-serif' font-size="11.5" fill="#d0d0d0">P[kW]</text><path d="M1080 618H1112" stroke="#ff7f0e" stroke-width="1.2"/><circle cx="1096.0" cy="618" r="2.5" fill="#ff7f0e"/><text x="1117.5" y="622" font-family='"Liberation Sans", sans-serif' font-size="11.5" fill="#d0d0d0">S[VA]</text><path d="M1080 635.5H1112" stroke="#2ca02c" stroke-width="1.2"/><circle cx="1096.0" cy="635.5" r="2.5" fill="#2ca02c"/><text x="1117.5" y="639.5" font-family='"Liberation Sans", sans-serif' font-size="11.5" fill="#d0d0d0">Oil Pressure</text><path d="M1080 653H1112" stroke="#d62728" stroke-width="1.2"/><circle cx="1096.0" cy="653" r="2.5" fill="#d62728"/><text x="1117.5" y="657" font-family='"Liberation Sans", sans-serif' font-size="11.5" fill="#d0d0d0">Temperature</text></svg><div style="position:absolute;left:5px;top:59px;width:870px;height:374px;background:#26405a;border:1px solid #27415a;box-shadow:0 4px 18px rgba(0,0,0,0.35)"></div><svg style="position:absolute;left:12px;top:66px" width="20" height="16" viewBox="12 66 20 16"><path d="M15.7 78.8 L18.6 74 L23.2 77.9 L27.1 70.4" stroke="#2a74c8" stroke-width="1.2" fill="none"/><circle cx="15.7" cy="78.8" r="1.5" fill="#8cc0f0" stroke="#2a74c8" stroke-width="1"/><circle cx="18.6" cy="74" r="1.4" fill="#6aa0d8" stroke="#2a74c8" stroke-width="1"/><circle cx="23.2" cy="77.9" r="1.9" fill="#f0e800" stroke="#2a74c8" stroke-width="1"/><circle cx="27.1" cy="70.4" r="2.4" fill="#66e07a" stroke="#2a74c8" stroke-width="1.1"/></svg><div style="position:absolute;left:34.5px;top:64.5px;line-height:20px;font-size:12.4px;color:#ffffff;white-space:nowrap;"><span style="display:inline-block;width:1em;text-align:center">实</span><span style="display:inline-block;width:1em;text-align:center">时</span><span style="display:inline-block;width:1em;text-align:center">绘</span><span style="display:inline-block;width:1em;text-align:center">图</span>-COM2-Slave1</div><svg style="position:absolute;left:0;top:0" width="1226" height="733" viewBox="0 0 1226 733"><g stroke="#ffffff" stroke-width="1" fill="none"><path d="M755 74.5h10"/><rect x="800.5" y="69.5" width="9" height="9"/><path d="M846 69l10 10M856 69l-10 10"/></g></svg><div style="position:absolute;left:6px;top:89.5px;width:868px;height:37px;background:#e6e6e6"></div><div style="position:absolute;left:21.2px;top:98.0px;line-height:20px;font-size:13.29px;color:#000;white-space:nowrap;">Y-Min:</div><div style="position:absolute;left:64.5px;top:95.5px;width:99px;height:25px;background:#fff;border:1px solid #dedede"></div><div style="position:absolute;left:173px;top:98.0px;line-height:20px;font-size:12.99px;color:#000;white-space:nowrap;">Y-Max:</div><div style="position:absolute;left:218.5px;top:95.5px;width:99px;height:25px;background:#fff;border:1px solid #dedede"></div><div style="position:absolute;left:328.0px;top:95.5px;width:65.0px;height:25px;background:#fcfcfc;border:1px solid #e2e2e2;border-radius:4px;box-sizing:border-box;text-align:center;line-height:23px;font-size:12.5px;color:#b0b0b0"><span style="display:inline-block;width:1em;text-align:center">确</span><span style="display:inline-block;width:1em;text-align:center">定</span></div><div style="position:absolute;left:548.2px;top:98.5px;width:16px;height:16px;border:1px solid #3d87d6;background:#80b8f0;border-radius:3px;box-sizing:content-box"></div><svg style="position:absolute;left:548.2px;top:98.5px" width="18" height="18"><path d="M4 9.5 L7.5 13 L14 5.5" stroke="#fff" stroke-width="2.2" fill="none"/></svg><div style="position:absolute;left:571.7px;top:97.5px;line-height:20px;font-size:12.2px;color:#000;white-space:nowrap;">X<span style="display:inline-block;width:1em;text-align:center">轴</span><span style="display:inline-block;width:1em;text-align:center">自</span><span style="display:inline-block;width:1em;text-align:center">适</span><span style="display:inline-block;width:1em;text-align:center">应</span></div><div style="position:absolute;left:638.0px;top:98.5px;width:16px;height:16px;border:1px solid #3d87d6;background:#80b8f0;border-radius:3px;box-sizing:content-box"></div><svg style="position:absolute;left:638.0px;top:98.5px" width="18" height="18"><path d="M4 9.5 L7.5 13 L14 5.5" stroke="#fff" stroke-width="2.2" fill="none"/></svg><div style="position:absolute;left:661.7px;top:97.5px;line-height:20px;font-size:12.2px;color:#000;white-space:nowrap;">Y<span style="display:inline-block;width:1em;text-align:center">轴</span><span style="display:inline-block;width:1em;text-align:center">自</span><span style="display:inline-block;width:1em;text-align:center">适</span><span style="display:inline-block;width:1em;text-align:center">应</span></div><div style="position:absolute;left:727.9px;top:96.0px;width:64.6px;height:24px;background:#fff;border:1px solid #dadada;border-radius:4px;box-sizing:border-box;text-align:center;line-height:22px;font-size:12.5px;color:#000"><span style="display:inline-block;width:1em;text-align:center">暂</span><span style="display:inline-block;width:1em;text-align:center">停</span></div><div style="position:absolute;left:803.7px;top:96.0px;width:64.6px;height:24px;background:#fff;border:1px solid #dadada;border-radius:4px;box-sizing:border-box;text-align:center;line-height:22px;font-size:12.5px;color:#000"><span style="display:inline-block;width:1em;text-align:center">继</span><span style="display:inline-block;width:1em;text-align:center">续</span></div><svg style="position:absolute;left:6px;top:126px" width="868" height="306" viewBox="6 126 868 306"><rect x="6" y="126" width="868" height="306" fill="#000"/><path d="M72.5 148V388M140.5 148V388M208.5 148V388M275.5 148V388M343.5 148V388M411.5 148V388M479.5 148V388M547.5 148V388M615.5 148V388M682.5 148V388M750.5 148V388M818.5 148V388M52 168.5H852M52 204.5H852M52 241.5H852M52 278.5H852M52 314.5H852M52 351.5H852M52 387.5H852" stroke="#363636" stroke-width="1" fill="none"/><path d="M58.5 388v3M72.5 388v6M85.5 388v3M99.5 388v3M113.5 388v3M126.5 388v3M140.5 388v6M153.5 388v3M167.5 388v3M180.5 388v3M194.5 388v3M208.5 388v6M221.5 388v3M235.5 388v3M248.5 388v3M262.5 388v3M275.5 388v6M289.5 388v3M303.5 388v3M316.5 388v3M330.5 388v3M343.5 388v6M357.5 388v3M370.5 388v3M384.5 388v3M397.5 388v3M411.5 388v6M425.5 388v3M438.5 388v3M452.5 388v3M465.5 388v3M479.5 388v6M492.5 388v3M506.5 388v3M520.5 388v3M533.5 388v3M547.5 388v6M560.5 388v3M574.5 388v3M587.5 388v3M601.5 388v3M615.5 388v6M628.5 388v3M642.5 388v3M655.5 388v3M669.5 388v3M682.5 388v6M696.5 388v3M710.5 388v3M723.5 388v3M737.5 388v3M750.5 388v6M764.5 388v3M777.5 388v3M791.5 388v3M804.5 388v3M818.5 388v6M832.5 388v3M845.5 388v3M52 387.5h-5M52 380.5h-3M52 373.5h-3M52 365.5h-3M52 358.5h-3M52 351.5h-5M52 343.5h-3M52 336.5h-3M52 329.5h-3M52 321.5h-3M52 314.5h-5M52 307.5h-3M52 299.5h-3M52 292.5h-3M52 285.5h-3M52 278.5h-5M52 270.5h-3M52 263.5h-3M52 256.5h-3M52 248.5h-3M52 241.5h-5M52 234.5h-3M52 226.5h-3M52 219.5h-3M52 212.5h-3M52 204.5h-5M52 197.5h-3M52 190.5h-3M52 182.5h-3M52 175.5h-3M52 168.5h-5M52 161.5h-3M52 153.5h-3" stroke="#8a8a8a" stroke-width="1" fill="none"/><rect x="52.5" y="148.5" width="800" height="240" stroke="#8a8a8a" stroke-width="1" fill="none"/><g font-family='"Liberation Sans", sans-serif' font-size="11.5" fill="#a0a0a0"><text x="72.4" y="405" text-anchor="middle">0</text><text x="140.2" y="405" text-anchor="middle">5</text><text x="208.1" y="405" text-anchor="middle">10</text><text x="275.9" y="405" text-anchor="middle">15</text><text x="343.7" y="405" text-anchor="middle">20</text><text x="411.6" y="405" text-anchor="middle">25</text><text x="479.4" y="405" text-anchor="middle">30</text><text x="547.2" y="405" text-anchor="middle">35</text><text x="615.0" y="405" text-anchor="middle">40</text><text x="682.9" y="405" text-anchor="middle">45</text><text x="750.7" y="405" text-anchor="middle">50</text><text x="818.5" y="405" text-anchor="middle">55</text><text x="45" y="172.4" text-anchor="end">5</text><text x="45" y="208.9" text-anchor="end">4</text><text x="45" y="245.5" text-anchor="end">3</text><text x="45" y="282.0" text-anchor="end">2</text><text x="45" y="318.6" text-anchor="end">1</text><text x="45" y="355.1" text-anchor="end">0</text><text x="45" y="391.7" text-anchor="end">-1</text></g><defs><clipPath id="cp6"><rect x="53" y="149" width="799" height="239"/></clipPath></defs><g clip-path="url(#cp6)"><polyline points="72.4,343.4 86.0,341.2 99.5,326.2 113.1,334.3 126.7,329.5 140.2,346.3 153.8,340.5 167.4,327.3 180.9,320.4 194.5,313.1 208.1,324.4 221.6,307.2 235.2,324.1 248.8,307.6 262.3,321.1 275.9,310.5 289.5,323.0 303.0,315.3 316.6,326.2 330.2,318.6 343.7,313.5 357.3,298.8 370.9,311.3 384.4,321.1 398.0,315.6 411.6,330.6 425.1,344.2 438.7,344.9 452.2,338.7 465.8,327.3 479.4,311.6 492.9,305.4 506.5,293.7 520.1,309.1 533.6,304.3 547.2,288.6 560.8,282.4 574.3,296.3 587.9,296.3 601.5,294.4 615.0,312.4 628.6,328.4 642.2,311.6 655.7,311.3 669.3,309.4 682.9,310.2 696.4,324.4 710.0,308.3 723.6,304.3 737.1,301.4 750.7,297.4 764.3,295.2 777.8,282.8 791.4,282.4 805.0,281.3 818.5,276.2 832.1,270.3" fill="none" stroke="#1f77b4" stroke-width="1"/><g fill="#1f77b4"><circle cx="72.4" cy="343.4" r="2.4"/><circle cx="86.0" cy="341.2" r="2.4"/><circle cx="99.5" cy="326.2" r="2.4"/><circle cx="113.1" cy="334.3" r="2.4"/><circle cx="126.7" cy="329.5" r="2.4"/><circle cx="140.2" cy="346.3" r="2.4"/><circle cx="153.8" cy="340.5" r="2.4"/><circle cx="167.4" cy="327.3" r="2.4"/><circle cx="180.9" cy="320.4" r="2.4"/><circle cx="194.5" cy="313.1" r="2.4"/><circle cx="208.1" cy="324.4" r="2.4"/><circle cx="221.6" cy="307.2" r="2.4"/><circle cx="235.2" cy="324.1" r="2.4"/><circle cx="248.8" cy="307.6" r="2.4"/><circle cx="262.3" cy="321.1" r="2.4"/><circle cx="275.9" cy="310.5" r="2.4"/><circle cx="289.5" cy="323.0" r="2.4"/><circle cx="303.0" cy="315.3" r="2.4"/><circle cx="316.6" cy="326.2" r="2.4"/><circle cx="330.2" cy="318.6" r="2.4"/><circle cx="343.7" cy="313.5" r="2.4"/><circle cx="357.3" cy="298.8" r="2.4"/><circle cx="370.9" cy="311.3" r="2.4"/><circle cx="384.4" cy="321.1" r="2.4"/><circle cx="398.0" cy="315.6" r="2.4"/><circle cx="411.6" cy="330.6" r="2.4"/><circle cx="425.1" cy="344.2" r="2.4"/><circle cx="438.7" cy="344.9" r="2.4"/><circle cx="452.2" cy="338.7" r="2.4"/><circle cx="465.8" cy="327.3" r="2.4"/><circle cx="479.4" cy="311.6" r="2.4"/><circle cx="492.9" cy="305.4" r="2.4"/><circle cx="506.5" cy="293.7" r="2.4"/><circle cx="520.1" cy="309.1" r="2.4"/><circle cx="533.6" cy="304.3" r="2.4"/><circle cx="547.2" cy="288.6" r="2.4"/><circle cx="560.8" cy="282.4" r="2.4"/><circle cx="574.3" cy="296.3" r="2.4"/><circle cx="587.9" cy="296.3" r="2.4"/><circle cx="601.5" cy="294.4" r="2.4"/><circle cx="615.0" cy="312.4" r="2.4"/><circle cx="628.6" cy="328.4" r="2.4"/><circle cx="642.2" cy="311.6" r="2.4"/><circle cx="655.7" cy="311.3" r="2.4"/><circle cx="669.3" cy="309.4" r="2.4"/><circle cx="682.9" cy="310.2" r="2.4"/><circle cx="696.4" cy="324.4" r="2.4"/><circle cx="710.0" cy="308.3" r="2.4"/><circle cx="723.6" cy="304.3" r="2.4"/><circle cx="737.1" cy="301.4" r="2.4"/><circle cx="750.7" cy="297.4" r="2.4"/><circle cx="764.3" cy="295.2" r="2.4"/><circle cx="777.8" cy="282.8" r="2.4"/><circle cx="791.4" cy="282.4" r="2.4"/><circle cx="805.0" cy="281.3" r="2.4"/><circle cx="818.5" cy="276.2" r="2.4"/><circle cx="832.1" cy="270.3" r="2.4"/></g><polyline points="72.4,340.1 86.0,350.7 99.5,353.3 113.1,360.2 126.7,361.7 140.2,348.5 153.8,355.1 167.4,336.8 180.9,335.7 194.5,334.3 208.1,335.7 221.6,331.0 235.2,335.0 248.8,335.0 262.3,343.4 275.9,349.3 289.5,359.5 303.0,355.1 316.6,341.2 330.2,328.4 343.7,338.7 357.3,353.7 370.9,348.2 384.4,330.3 398.0,321.5 411.6,313.5 425.1,298.5 438.7,296.6 452.2,298.1 465.8,286.8 479.4,295.2 492.9,301.0 506.5,311.3 520.1,306.5 533.6,291.5 547.2,307.2 560.8,321.5 574.3,317.5 587.9,330.6 601.5,340.9 615.0,345.6 628.6,353.7 642.2,335.7 655.7,344.5 669.3,360.2 682.9,347.4 696.4,338.7 710.0,352.2 723.6,340.1 737.1,352.2 750.7,343.8 764.3,347.4 777.8,340.1 791.4,351.1 805.0,343.8 818.5,336.5 832.1,347.4" fill="none" stroke="#ff7f0e" stroke-width="1"/><g fill="#ff7f0e"><circle cx="72.4" cy="340.1" r="2.4"/><circle cx="86.0" cy="350.7" r="2.4"/><circle cx="99.5" cy="353.3" r="2.4"/><circle cx="113.1" cy="360.2" r="2.4"/><circle cx="126.7" cy="361.7" r="2.4"/><circle cx="140.2" cy="348.5" r="2.4"/><circle cx="153.8" cy="355.1" r="2.4"/><circle cx="167.4" cy="336.8" r="2.4"/><circle cx="180.9" cy="335.7" r="2.4"/><circle cx="194.5" cy="334.3" r="2.4"/><circle cx="208.1" cy="335.7" r="2.4"/><circle cx="221.6" cy="331.0" r="2.4"/><circle cx="235.2" cy="335.0" r="2.4"/><circle cx="248.8" cy="335.0" r="2.4"/><circle cx="262.3" cy="343.4" r="2.4"/><circle cx="275.9" cy="349.3" r="2.4"/><circle cx="289.5" cy="359.5" r="2.4"/><circle cx="303.0" cy="355.1" r="2.4"/><circle cx="316.6" cy="341.2" r="2.4"/><circle cx="330.2" cy="328.4" r="2.4"/><circle cx="343.7" cy="338.7" r="2.4"/><circle cx="357.3" cy="353.7" r="2.4"/><circle cx="370.9" cy="348.2" r="2.4"/><circle cx="384.4" cy="330.3" r="2.4"/><circle cx="398.0" cy="321.5" r="2.4"/><circle cx="411.6" cy="313.5" r="2.4"/><circle cx="425.1" cy="298.5" r="2.4"/><circle cx="438.7" cy="296.6" r="2.4"/><circle cx="452.2" cy="298.1" r="2.4"/><circle cx="465.8" cy="286.8" r="2.4"/><circle cx="479.4" cy="295.2" r="2.4"/><circle cx="492.9" cy="301.0" r="2.4"/><circle cx="506.5" cy="311.3" r="2.4"/><circle cx="520.1" cy="306.5" r="2.4"/><circle cx="533.6" cy="291.5" r="2.4"/><circle cx="547.2" cy="307.2" r="2.4"/><circle cx="560.8" cy="321.5" r="2.4"/><circle cx="574.3" cy="317.5" r="2.4"/><circle cx="587.9" cy="330.6" r="2.4"/><circle cx="601.5" cy="340.9" r="2.4"/><circle cx="615.0" cy="345.6" r="2.4"/><circle cx="628.6" cy="353.7" r="2.4"/><circle cx="642.2" cy="335.7" r="2.4"/><circle cx="655.7" cy="344.5" r="2.4"/><circle cx="669.3" cy="360.2" r="2.4"/><circle cx="682.9" cy="347.4" r="2.4"/><circle cx="696.4" cy="338.7" r="2.4"/><circle cx="710.0" cy="352.2" r="2.4"/><circle cx="723.6" cy="340.1" r="2.4"/><circle cx="737.1" cy="352.2" r="2.4"/><circle cx="750.7" cy="343.8" r="2.4"/><circle cx="764.3" cy="347.4" r="2.4"/><circle cx="777.8" cy="340.1" r="2.4"/><circle cx="791.4" cy="351.1" r="2.4"/><circle cx="805.0" cy="343.8" r="2.4"/><circle cx="818.5" cy="336.5" r="2.4"/><circle cx="832.1" cy="347.4" r="2.4"/></g><polyline points="72.4,341.6 86.0,339.4 99.5,321.9 113.1,323.3 126.7,305.0 140.2,286.8 153.8,275.4 167.4,292.6 180.9,276.5 194.5,292.3 208.1,299.9 221.6,290.1 235.2,295.5 248.8,288.2 262.3,272.9 275.9,274.3 289.5,278.0 303.0,278.4 316.6,265.9 330.2,259.7 343.7,245.5 357.3,232.7 370.9,220.6 384.4,221.3 398.0,210.4 411.6,202.0 425.1,212.9 438.7,219.9 452.2,207.1 465.8,197.6 479.4,196.9 492.9,204.9 506.5,216.2 520.1,209.3 533.6,219.5 547.2,204.9 560.8,217.7 574.3,201.2 587.9,194.7 601.5,190.3 615.0,177.1 628.6,170.2 642.2,174.6 655.7,174.2 669.3,181.9 682.9,177.1 696.4,181.5 710.0,174.2 723.6,166.9 737.1,178.2 750.7,160.7 764.3,169.4 777.8,163.6 791.4,179.3 805.0,167.6 818.5,165.4 832.1,173.5" fill="none" stroke="#2ca02c" stroke-width="1"/><g fill="#2ca02c"><circle cx="72.4" cy="341.6" r="2.4"/><circle cx="86.0" cy="339.4" r="2.4"/><circle cx="99.5" cy="321.9" r="2.4"/><circle cx="113.1" cy="323.3" r="2.4"/><circle cx="126.7" cy="305.0" r="2.4"/><circle cx="140.2" cy="286.8" r="2.4"/><circle cx="153.8" cy="275.4" r="2.4"/><circle cx="167.4" cy="292.6" r="2.4"/><circle cx="180.9" cy="276.5" r="2.4"/><circle cx="194.5" cy="292.3" r="2.4"/><circle cx="208.1" cy="299.9" r="2.4"/><circle cx="221.6" cy="290.1" r="2.4"/><circle cx="235.2" cy="295.5" r="2.4"/><circle cx="248.8" cy="288.2" r="2.4"/><circle cx="262.3" cy="272.9" r="2.4"/><circle cx="275.9" cy="274.3" r="2.4"/><circle cx="289.5" cy="278.0" r="2.4"/><circle cx="303.0" cy="278.4" r="2.4"/><circle cx="316.6" cy="265.9" r="2.4"/><circle cx="330.2" cy="259.7" r="2.4"/><circle cx="343.7" cy="245.5" r="2.4"/><circle cx="357.3" cy="232.7" r="2.4"/><circle cx="370.9" cy="220.6" r="2.4"/><circle cx="384.4" cy="221.3" r="2.4"/><circle cx="398.0" cy="210.4" r="2.4"/><circle cx="411.6" cy="202.0" r="2.4"/><circle cx="425.1" cy="212.9" r="2.4"/><circle cx="438.7" cy="219.9" r="2.4"/><circle cx="452.2" cy="207.1" r="2.4"/><circle cx="465.8" cy="197.6" r="2.4"/><circle cx="479.4" cy="196.9" r="2.4"/><circle cx="492.9" cy="204.9" r="2.4"/><circle cx="506.5" cy="216.2" r="2.4"/><circle cx="520.1" cy="209.3" r="2.4"/><circle cx="533.6" cy="219.5" r="2.4"/><circle cx="547.2" cy="204.9" r="2.4"/><circle cx="560.8" cy="217.7" r="2.4"/><circle cx="574.3" cy="201.2" r="2.4"/><circle cx="587.9" cy="194.7" r="2.4"/><circle cx="601.5" cy="190.3" r="2.4"/><circle cx="615.0" cy="177.1" r="2.4"/><circle cx="628.6" cy="170.2" r="2.4"/><circle cx="642.2" cy="174.6" r="2.4"/><circle cx="655.7" cy="174.2" r="2.4"/><circle cx="669.3" cy="181.9" r="2.4"/><circle cx="682.9" cy="177.1" r="2.4"/><circle cx="696.4" cy="181.5" r="2.4"/><circle cx="710.0" cy="174.2" r="2.4"/><circle cx="723.6" cy="166.9" r="2.4"/><circle cx="737.1" cy="178.2" r="2.4"/><circle cx="750.7" cy="160.7" r="2.4"/><circle cx="764.3" cy="169.4" r="2.4"/><circle cx="777.8" cy="163.6" r="2.4"/><circle cx="791.4" cy="179.3" r="2.4"/><circle cx="805.0" cy="167.6" r="2.4"/><circle cx="818.5" cy="165.4" r="2.4"/><circle cx="832.1" cy="173.5" r="2.4"/></g></g><rect x="745.5" y="332.5" width="102.5" height="52.5" fill="#000" stroke="#c8c8c8" stroke-width="1"/><path d="M750 341H781" stroke="#1f77b4" stroke-width="1.2"/><circle cx="765.5" cy="341" r="2.5" fill="#1f77b4"/><text x="787.5" y="345" font-family='"Liberation Sans", sans-serif' font-size="11.5" fill="#d0d0d0">U-L1L2[V]</text><path d="M750 358H781" stroke="#ff7f0e" stroke-width="1.2"/><circle cx="765.5" cy="358" r="2.5" fill="#ff7f0e"/><text x="787.5" y="362" font-family='"Liberation Sans", sans-serif' font-size="11.5" fill="#d0d0d0">U-L2L3[V]</text><path d="M750 375H781" stroke="#2ca02c" stroke-width="1.2"/><circle cx="765.5" cy="375" r="2.5" fill="#2ca02c"/><text x="787.5" y="379" font-family='"Liberation Sans", sans-serif' font-size="11.5" fill="#d0d0d0">U-L3L1[V]</text></svg></body></html>
